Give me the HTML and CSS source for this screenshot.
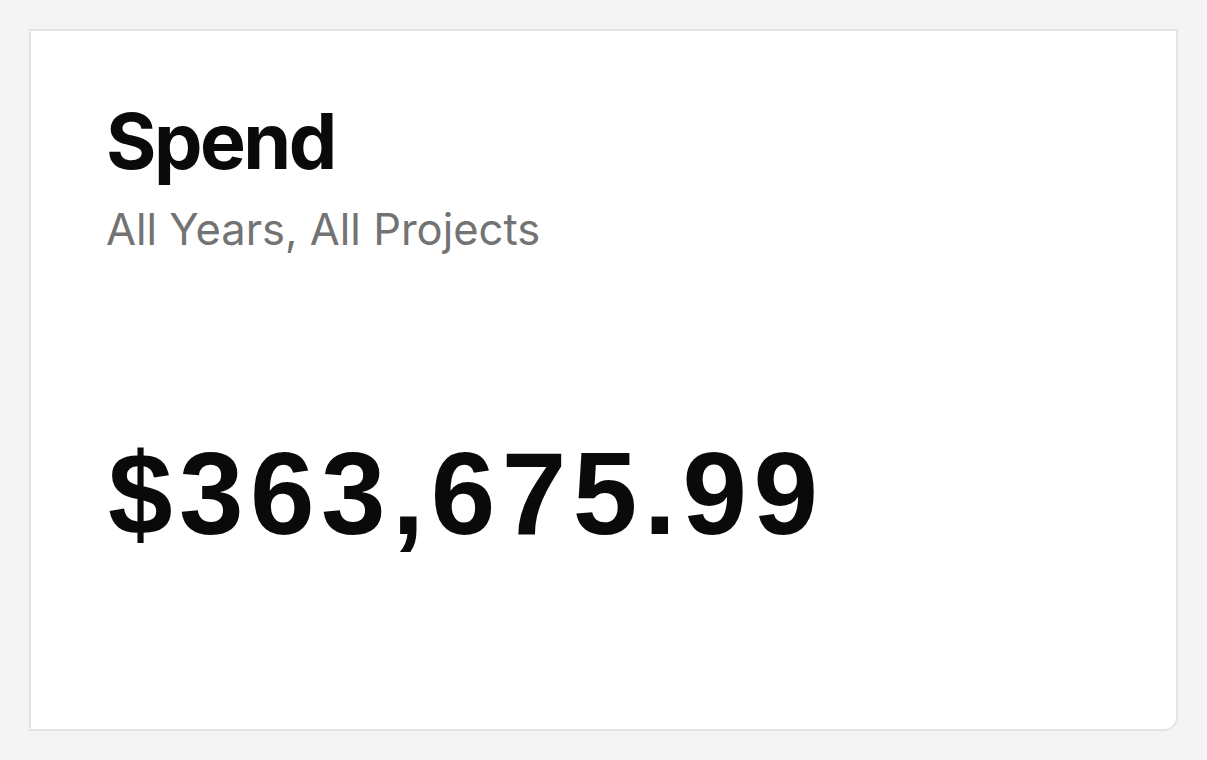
FILE: index.html
```html
<!DOCTYPE html>
<html>
<head>
<meta charset="utf-8">
<link rel="stylesheet" href="styles.css">
</head>
<body>
<div class="card">
  <h1 class="title">Spend</h1>
  <p class="subtitle">All Years, All Projects</p>
  <p class="amount">$363,675.99</p>
</div>
</body>
</html>
```
FILE: styles.css
```css
html, body {
  margin: 0;
  padding: 0;
  background: #f4f4f4;
}
body {
  padding: 29px;
  width: 1207px;
  height: 760px;
  box-sizing: border-box;
}
.card {
  box-sizing: border-box;
  width: 1149px;
  height: 702px;
  background: #ffffff;
  border: 2px solid #e4e4e4;
  border-bottom-right-radius: 14px;
  padding: 72px 0 0 75px;
}
.title {
  margin: 0;
  font-family: Inter, "Liberation Sans", sans-serif;
  font-weight: 700;
  font-size: 77px;
  line-height: 1;
  color: #0a0a0a;
  letter-spacing: -2.5px;
}
.subtitle {
  margin: 28px 0 0;
  font-family: Inter, "Liberation Sans", sans-serif;
  font-weight: 400;
  font-size: 43.5px;
  line-height: 1;
  color: #737373;
}
.amount {
  margin: 184px 0 0 2px;
  font-family: "Liberation Sans", Arial, sans-serif;
  font-weight: 700;
  font-size: 116px;
  line-height: 1;
  color: #0a0a0a;
  letter-spacing: 6.5px;
}
```
